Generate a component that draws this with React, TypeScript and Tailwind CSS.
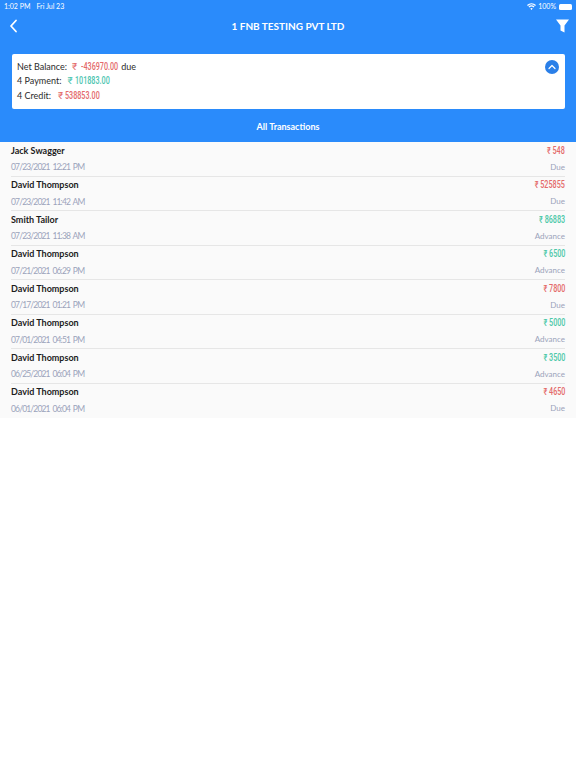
import React from "react";

const rows = [
  ["Jack Swagger", "07/23/2021 12:21 PM", "548", "Due"],
  ["David Thompson", "07/23/2021 11:42 AM", "525855", "Due"],
  ["Smith Tailor", "07/23/2021 11:38 AM", "86883", "Advance"],
  ["David Thompson", "07/21/2021 06:29 PM", "6500", "Advance"],
  ["David Thompson", "07/17/2021 01:21 PM", "7800", "Due"],
  ["David Thompson", "07/01/2021 04:51 PM", "5000", "Advance"],
  ["David Thompson", "06/25/2021 06:04 PM", "3500", "Advance"],
  ["David Thompson", "06/01/2021 06:04 PM", "4650", "Due"],
];

const num = "font-['Roboto',sans-serif] font-medium inline-block scale-x-[0.72] whitespace-nowrap";

function Row({ r, last }: { r: string[]; last: boolean }) {
  const due = r[3] === "Due";
  return (
    <div className="px-[11px]">
      <div className={`h-[34.5px] flex justify-between pt-[1.5px] ${last ? "" : "border-b border-[#e6e6e6]"}`}>
        <div className="flex flex-col">
          <span className="text-[9px] leading-[13px] font-bold text-[#1c1c1c]">{r[0]}</span>
          <span className="text-[8.5px] leading-[12px] mt-[4.5px] tracking-[-0.85px] [word-spacing:1.5px] text-[#9aa3bb]">{r[1]}</span>
        </div>
        <div className="flex flex-col items-end">
          <span className={`text-[10px] leading-[14px] origin-right ${num} ${due ? "text-[#e46a6a]" : "text-[#4cc8a8]"}`}>₹ {r[2]}</span>
          <span className="text-[8px] leading-[12px] mt-[3px] text-[#9aa3bb]">{r[3]}</span>
        </div>
      </div>
    </div>
  );
}

export default function App() {
  return (
    <div className="w-[576px] h-[768px] bg-white font-['Lato','Noto_Sans',sans-serif] overflow-hidden">
      <div className="bg-[#2a8bfb] h-[142px] flex flex-col text-white">
        <div className="h-[12px] flex items-center justify-between pl-[4px] pr-[4px] text-[7px] pt-[1px]">
          <div className="flex gap-[6px]"><span>1:02 PM</span><span>Fri Jul 23</span></div>
          <div className="flex items-center gap-[2px]">
            <svg width="9" height="7" viewBox="0 0 18 14" fill="white"><path d="M9 14 6.5 11a4 4 0 0 1 5 0zM4.8 9 3 7a9 9 0 0 1 12 0l-1.8 2a6 6 0 0 0-8.4 0zM1.8 5.8 0 3.8a13.5 13.5 0 0 1 18 0l-1.8 2a11 11 0 0 0-14.4 0z"/></svg>
            <span>100%</span>
            <span className="w-[13px] h-[6px] rounded-[1.5px] bg-white ml-[1px]" />
          </div>
        </div>
        <div className="relative h-[28px] flex items-center justify-between pl-[9px] pr-[7px]">
          <svg width="9" height="14" viewBox="0 0 9 14" fill="none" stroke="white" strokeWidth="1.8" strokeLinecap="round" strokeLinejoin="round"><path d="M7 1.5 2 7l5 5.5"/></svg>
          <span className="absolute inset-x-0 text-center text-[10px] font-bold">1 FNB TESTING PVT LTD</span>
          <svg width="13" height="14" viewBox="0 0 13 14" fill="white"><path d="M0 .5h13L8.5 6.4V13.5L4.5 11.5V6.4z"/></svg>
        </div>
        <div className="mx-[11.5px] mt-[14px] h-[55px] bg-white rounded-[2px] text-[#2b2b2b] text-[9px] relative pl-[5.5px] pt-[5px]">
          <div className="flex items-center h-[14.5px]">
            <span>Net Balance:</span>
            <span className="ml-[5px] text-[#e46a6a] text-[10px] font-['Roboto',sans-serif]">₹</span>
            <span className={`ml-[4px] origin-left w-[40px] text-[#e46a6a] text-[10px] ${num}`}>-436970.00</span>
            <span>due</span>
          </div>
          <div className="flex items-center h-[14.5px]">
            <span>4 Payment:</span>
            <span className="ml-[6px] text-[#4cc5b0] text-[10px] font-['Roboto',sans-serif]">₹</span>
            <span className={`ml-[2px] origin-left text-[#4cc5b0] text-[10px] ${num}`}>101883.00</span>
          </div>
          <div className="flex items-center h-[14.5px]">
            <span>4 Credit:</span>
            <span className="ml-[7px] text-[#e46a6a] text-[10px] font-['Roboto',sans-serif]">₹</span>
            <span className={`ml-[2px] origin-left text-[#e46a6a] text-[10px] ${num}`}>538853.00</span>
          </div>
          <div className="absolute right-[6px] top-[6px] w-[14px] h-[14px] rounded-full bg-[#2a7fe8] flex items-center justify-center">
            <svg width="8" height="6" viewBox="0 0 8 6" fill="none" stroke="white" strokeWidth="1.2" strokeLinecap="round" strokeLinejoin="round"><path d="M1 4.5 4 1.5l3 3"/></svg>
          </div>
        </div>
        <div className="text-center text-[9px] font-bold mt-[11px]">All Transactions</div>
      </div>
      <div className="bg-[#fafafa]">
        {rows.map((r, i) => <Row key={i} r={r} last={i === rows.length - 1} />)}
      </div>
    </div>
  );
}
